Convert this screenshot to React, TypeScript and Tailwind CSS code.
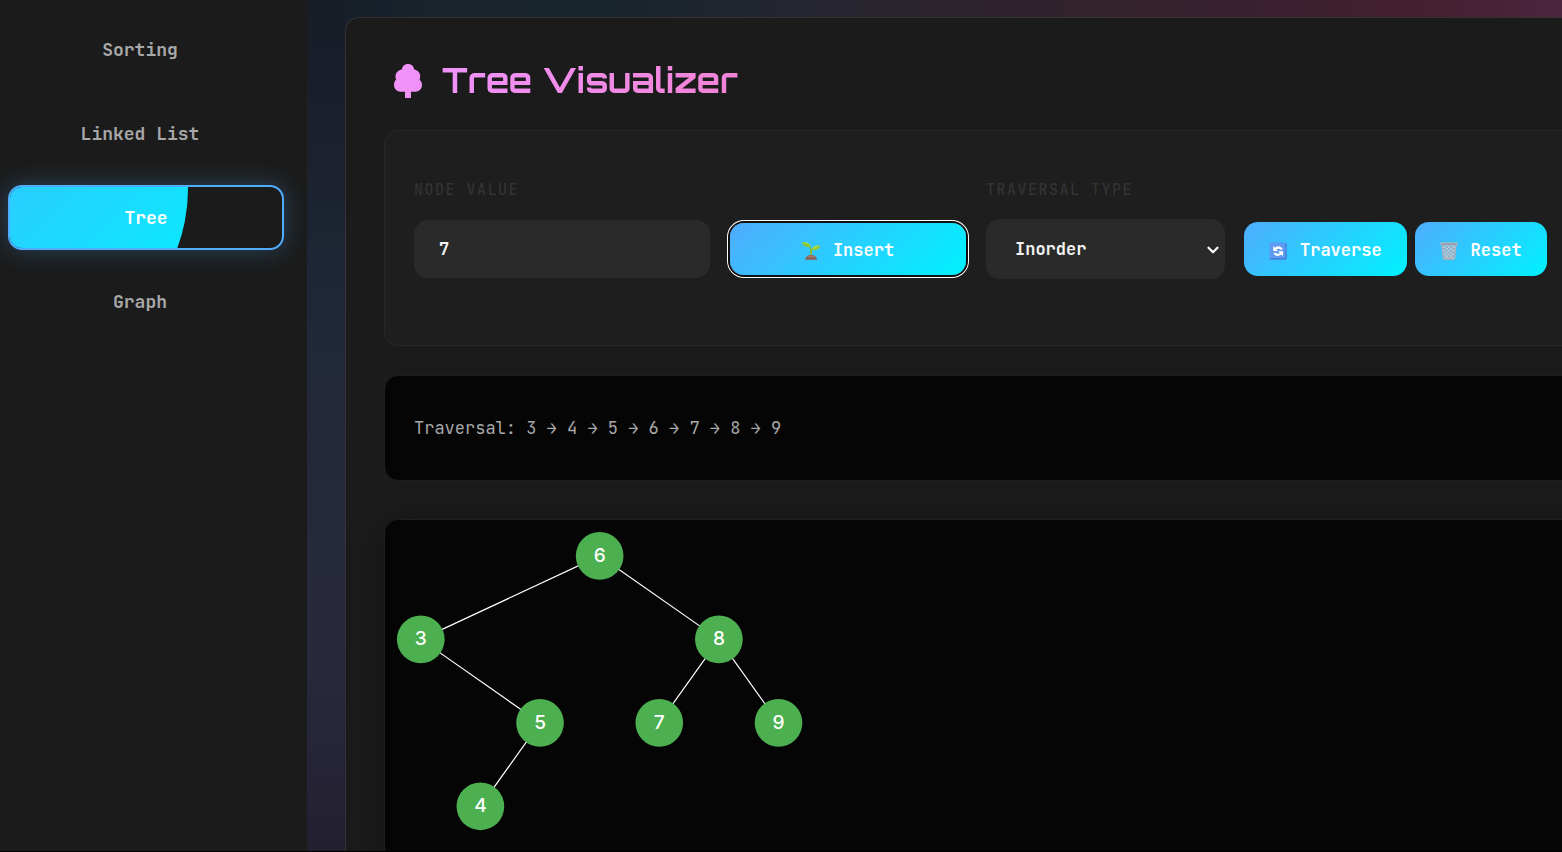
import React, { useState } from "react";
import { ChevronDown } from "lucide-react";
import clsx from "clsx";

type TreeNode = { value: number; x: number; y: number };

const nodes: TreeNode[] = [
  { value: 6, x: 180, y: 30 },
  { value: 3, x: 30, y: 100 },
  { value: 8, x: 280, y: 100 },
  { value: 5, x: 130, y: 170 },
  { value: 7, x: 230, y: 170 },
  { value: 9, x: 330, y: 170 },
  { value: 4, x: 80, y: 240 },
];

const edges: [number, number][] = [
  [0, 1],
  [0, 2],
  [1, 3],
  [2, 4],
  [2, 5],
  [3, 6],
];

const pages = ["Sorting", "Linked List", "Tree", "Graph"];

function TreeIcon() {
  return (
    <svg viewBox="0 0 28 34" className="h-[34px] w-7 shrink-0" aria-hidden="true">
      <defs>
        <linearGradient id="leaf" x1="0" y1="0" x2="1" y2="1">
          <stop offset="0" stopColor="#f093fb" />
          <stop offset="1" stopColor="#f090f5" />
        </linearGradient>
      </defs>
      <path
        fill="url(#leaf)"
        d="M14 0C17.300 0 19.800 2.200 20.200 5.400C23.800 6 26.600 9 26.200 12.800C26.100 13.800 25.900 14.600 25.500 15.400C27.100 16.800 28 18.800 28 21C28 25 25 27.600 21.500 27.700H17V34H11V27.700H6.500C3 27.600 0 25 0 21C0 18.800.9 16.800 2.200 15.600C1.500 14.200 1.400 13.200 1.500 12C1.700 8.700 4.400 6 7.800 5.500C8.300 2.200 10.800 0 14 0Z"
      />
    </svg>
  );
}

function SeedlingIcon() {
  return (
    <svg viewBox="0 0 18 18" className="size-[18px]" aria-hidden="true">
      <path d="M8.200 13.500V8.500C8 6.500 7.200 4.700 5.500 3.600L6.200 3C8 4.100 9.100 5.600 9.400 7.200C10.200 6.200 11.300 5.600 12.600 5.300L12.800 6C10.800 6.800 10 8.100 10 10V13.500Z" fill="#86bd2f" />
      <path d="M0 .6C3.300-.1 7.200.1 8.800 4.500C5.200 5.600 1.300 4.900 0 .6Z" fill="#a9dc45" />
      <path d="M0 .6C3.500 1.600 6 2.600 8.800 4.500C5.200 5.600 1.300 4.900 0 .6Z" fill="#86c232" />
      <path d="M18 3.600C17.700 7.600 14.600 9 9.900 7.800C10.800 4.200 13.900 3.100 18 3.600Z" fill="#93cd38" />
      <path d="M18 3.600C15 4.500 12.300 5.700 9.900 7.800C10.800 4.200 13.900 3.100 18 3.600Z" fill="#b4e34f" />
      <path d="M3 17.800C3.300 14.700 5.900 12.900 9 12.900C12.100 12.900 14.700 14.700 15 17.800Z" fill="#8d5f57" />
      <path d="M5 15.500C6 13.900 7.300 13.400 9 13.400C10.900 13.400 12.300 14.200 13.200 15.500C10.500 14.700 7.700 14.700 5 15.500Z" fill="#ac7b70" />
    </svg>
  );
}

function RefreshIcon() {
  return (
    <svg viewBox="0 0 18 18" className="size-[18px]" aria-hidden="true">
      <rect x=".5" y=".5" width="17" height="17" rx="1.500" fill="#5d9af0" />
      <path d="M.5 15V16C.5 17 1 17.500 2 17.500H16C17 17.500 17.500 17 17.500 16V2L16.400 1.500V16.300H.5Z" fill="#3f78d8" />
      <path d="M4.200 4V9H9L7.300 7.300C8.700 6.300 10.500 6.500 11.800 7.900L13.700 6.900C11.900 4 8.400 3.500 5.900 5.700Z" fill="#fff" />
      <path d="M14 14.300V9.300H9.200L10.900 11C9.500 12.200 7.600 11.900 6.300 10.400L4.400 11.400C6.300 14.300 9.800 14.800 12.300 12.600Z" fill="#fff" />
    </svg>
  );
}

function BinIcon() {
  return (
    <svg viewBox="0 0 18 18" className="size-[18px]" aria-hidden="true">
      <path d="M1.500 2.500H16.500L14.900 16.700Q14.800 17.700 13.800 17.700H4.200Q3.200 17.700 3.100 16.700Z" fill="#7fb0cf" />
      <path
        d="M3 6L7 2.500M3.200 10L11 3M3.700 13.500L15 3.500M5 16L15 7M9 16L14.700 11M15 6L11 2.500M14.800 10L7 3M14.300 13.500L3 3.500M13 16L3 7M9 16L3.500 11"
        stroke="#cfd5db"
        strokeWidth=".8"
      />
      <path d="M2 3L3.500 16.500M16 3L14.500 16.500" stroke="#b4b2bb" strokeWidth="1.200" />
      <path d="M3.300 15.300H14.700L14.500 17.600H3.500Z" fill="#b7b6be" />
      <rect x=".2" y=".4" width="17.600" height="2.300" rx="1" fill="#c3c0c6" />
      <rect x="1.200" y="1.500" width="15.600" height="1" rx=".5" fill="#85838c" />
    </svg>
  );
}

type ActionProps = {
  icon: React.ReactNode;
  label: string;
  className?: string;
  onClick?: () => void;
};

function ActionButton({ icon, label, className, onClick }: ActionProps) {
  return (
    <button
      type="button"
      onClick={onClick}
      className={clsx(
        "flex shrink-0 items-center justify-center gap-[13px] rounded-[14px] bg-[linear-gradient(135deg,#4facfe_0%,#00f2fe_100%)] pt-[3px] text-[17px] font-bold text-white outline-none",
        className,
      )}
    >
      {icon}
      {label}
    </button>
  );
}

export default function App() {
  const [page, setPage] = useState("Tree");
  const [value, setValue] = useState("7");
  const [order, setOrder] = useState("Inorder");

  return (
    <div className="flex h-screen overflow-hidden border-b border-black bg-[#1b1b1b] font-['JetBrains_Mono','DejaVu_Sans_Mono',monospace]">
      <nav className="flex w-[307px] shrink-0 flex-col gap-[19px] pt-[17px] pr-[29px] pl-0.5">
        {pages.map((name) => (
          <button
            key={name}
            type="button"
            onClick={() => setPage(name)}
            className={clsx(
              "relative h-[65px] w-full overflow-hidden rounded-[14px] border-2 text-[18px] font-bold",
              name === page
                ? "translate-x-1.5 border-[#4facfe] text-white shadow-[0_0_24px_rgba(79,172,254,0.3)]"
                : "border-transparent text-[#a8a8a8]",
            )}
          >
            {name === page && (
              <span className="absolute -top-[166px] -left-[158px] size-[336px] rounded-full bg-[linear-gradient(135deg,#4facfe_0%,#00f2fe_100%)]" />
            )}
            <span className="relative">{name}</span>
          </button>
        ))}
      </nav>

      <main className="flex min-w-0 flex-1 flex-col bg-[linear-gradient(to_bottom,#171c27_0%,#1b222d_18%,#21283a_42%,#28293d_72%,#27273a_85%,#221f2f_100%),linear-gradient(to_right,#171d28_0%,#18232c_10%,#18242c_24%,#222631_36%,#2b232d_50%,#33222c_64%,#3a202f_75%,#44202f_88%,#4b253d_100%)] bg-[size:38px_100%,100%_100%] bg-no-repeat pt-[17px] pl-[38px]">
        <section className="-mr-[120px] flex flex-1 flex-col rounded-tl-[14px] border border-b-0 border-[#333] bg-[#1b1b1b] pt-[38px] pr-[38px] pl-[38px]">
          <h1 className="flex h-[50px] items-center gap-5 pl-2.5 font-['Orbitron','DejaVu_Sans',sans-serif] text-[34px] font-bold">
            <TreeIcon />
            <span className="flex-1 bg-[linear-gradient(135deg,#f093fb_0%,#f5576c_100%)] bg-clip-text pb-0.5 text-transparent">
              Tree Visualizer
            </span>
          </h1>

          <form
            className="mt-6 flex items-end rounded-[14px] border border-[#282828] bg-[#1e1e1e] px-[29px] pt-12 pb-[66px]"
            onSubmit={(event) => event.preventDefault()}
          >
            <div className="mr-5 flex w-[296px] shrink-0 flex-col gap-[18px]">
              <label htmlFor="node-value" className="text-[15px] leading-[22px] font-medium tracking-widest text-[#333] uppercase">
                Node Value
              </label>
              <div className="flex h-[60px] items-center">
                <input
                  id="node-value"
                  value={value}
                  onChange={(event) => setValue(event.target.value)}
                  className="h-[58px] w-full rounded-[14px] bg-[#2a2a2a] px-[25px] text-[17px] font-bold text-[#f2f2f2] outline-none"
                />
              </div>
            </div>
            <div className="mr-5 flex h-[60px] items-center">
              <ActionButton
                icon={<SeedlingIcon />}
                label="Insert"
                className="h-[52px] w-[236px] shadow-[0_0_0_2px_#101010,0_0_0_3px_#fff]"
              />
            </div>
            <div className="mr-[19px] flex w-[239px] shrink-0 flex-col gap-[18px]">
              <label htmlFor="traversal" className="text-[15px] leading-[22px] font-medium tracking-widest text-[#333] uppercase">
                Traversal Type
              </label>
              <div className="grid h-[60px] items-center">
                <select
                  id="traversal"
                  value={order}
                  onChange={(event) => setOrder(event.target.value)}
                  className="col-start-1 row-start-1 h-[60px] w-full appearance-none rounded-[14px] bg-[#2a2a2a] pt-0.5 pr-8 pl-[29px] text-[17px] font-bold text-[#f2f2f2] outline-none"
                >
                  <option>Inorder</option>
                  <option>Preorder</option>
                  <option>Postorder</option>
                </select>
                <ChevronDown
                  className="pointer-events-none col-start-1 row-start-1 mt-0.5 mr-[3px] size-[18px] justify-self-end text-white"
                  strokeWidth={3}
                />
              </div>
            </div>
            <div className="flex h-[60px] items-center gap-2">
              <ActionButton icon={<RefreshIcon />} label="Traverse" className="h-[54px] px-[25px]" />
              <ActionButton icon={<BinIcon />} label="Reset" className="h-[54px] px-[25px]" onClick={() => setValue("")} />
            </div>
          </form>

          <output className="mt-[29px] flex h-[106px] shrink-0 items-center rounded-[14px] border border-[#1f1f1f] bg-[#050505] px-[29px] pt-0.5 text-[17px] text-[#a8a8a8]">
            Traversal: 3 → 4 → 5 → 6 → 7 → 8 → 9
          </output>

          <div className="mt-[38px] flex-1 overflow-hidden rounded-tl-[14px] border border-b-0 border-[#1f1f1f] bg-[#050505] shadow-[0_10px_38px_rgba(0,0,0,0.3)]">
            <svg viewBox="0 0 400 300" className="h-[358px] w-[477px]" role="img" aria-label="Binary search tree">
              {edges.map(([from, to]) => (
                <line
                  key={to}
                  x1={nodes[from].x}
                  y1={nodes[from].y}
                  x2={nodes[to].x}
                  y2={nodes[to].y}
                  stroke="#fff"
                />
              ))}
              {nodes.map((node) => (
                <g key={node.value}>
                  <circle cx={node.x} cy={node.y} r="20" fill="#4caf50" />
                  <text
                    x={node.x}
                    y={node.y + 5}
                    textAnchor="middle"
                    className="fill-white font-['Inter',sans-serif] text-[16px] font-medium"
                  >
                    {node.value}
                  </text>
                </g>
              ))}
            </svg>
          </div>
        </section>
      </main>
    </div>
  );
}
